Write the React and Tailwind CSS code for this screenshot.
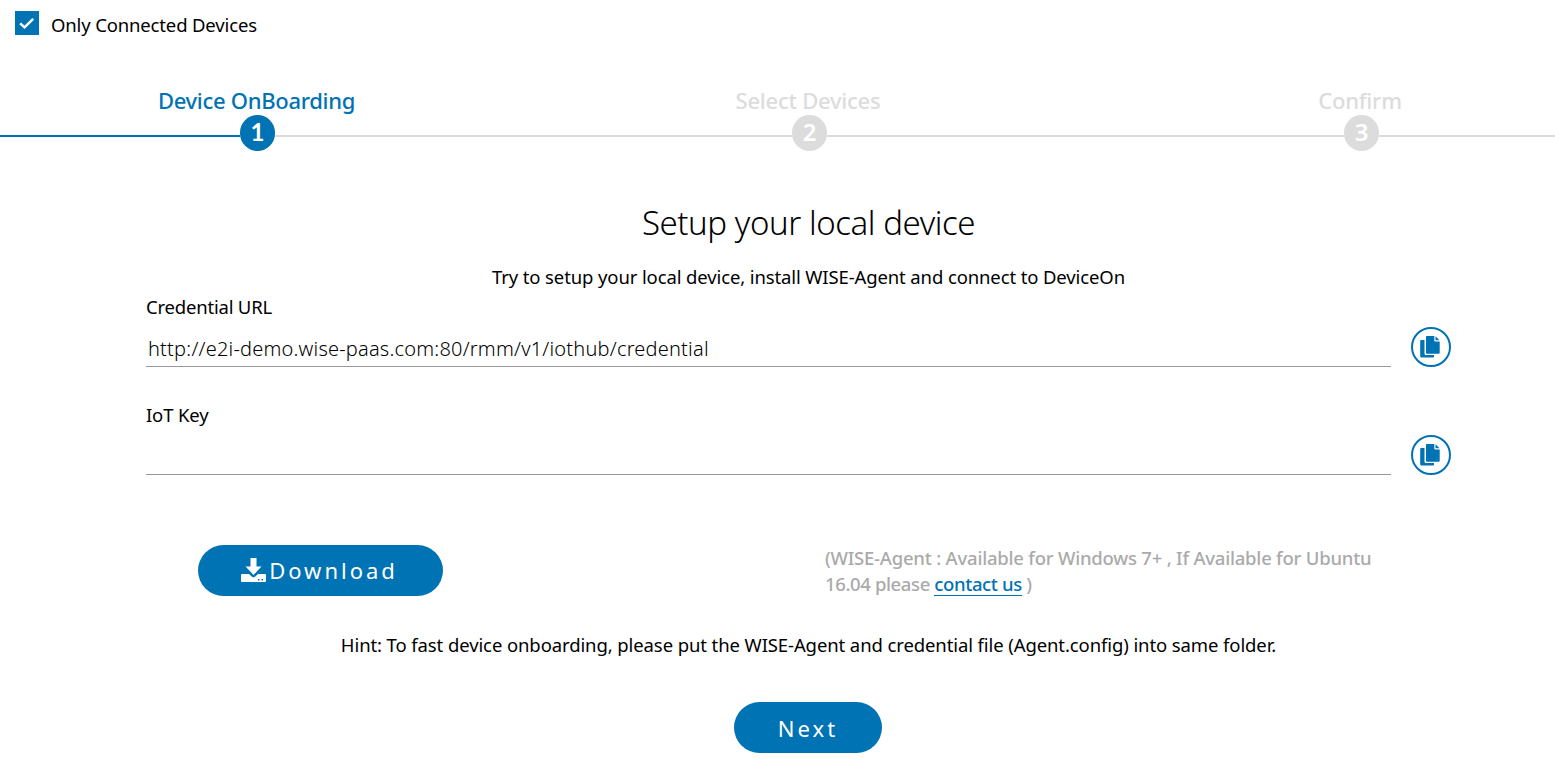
const steps = [
  { n: 1, label: "Device OnBoarding", active: true },
  { n: 2, label: "Select Devices" },
  { n: 3, label: "Confirm" },
];

function CopyIcon() {
  return (
    <svg viewBox="0 0 20 22" className="mr-0.5 h-[22px] w-5 shrink-0" fill="#0073b4">
      <path d="M1.300 4H4.500v13.500a1.500 1.500 0 0 0 1.500 1.500H14v1.500a1 1 0 0 1-1 1H1.500A1.300 1.300 0 0 1 .2 20.200V5A1 1 0 0 1 1.300 4z" />
      <path d="M6.800 0H14.300v4.500a1 1 0 0 0 1 1H19.700v11.200a1 1 0 0 1-1 1H6.800a.8.8 0 0 1-.8-.8V.8a.8.8 0 0 1 .8-.8z" />
      <path d="M15.500 0.200l4 4.100h-4z" />
    </svg>
  );
}

function Field({ label, labelClass, value }) {
  return (
    <div className="h-[108px]">
      <div className={"h-[31px] text-[18.5px] leading-[30px] " + labelClass}>{label}</div>
      <div className="flex h-11 items-start gap-5">
        <div className="h-11 w-[1245px] border-b border-[#999] pl-0.5 text-[20px] leading-[52px] font-light tracking-[0.2px] whitespace-nowrap">
          {value}
        </div>
        <button className="mt-1 flex size-10 items-center justify-center rounded-full border-2 border-[#0073b4]">
          <CopyIcon />
        </button>
      </div>
    </div>
  );
}

export default function App() {
  return (
    <div className="h-[773px] w-[1555px] overflow-hidden bg-white font-['Noto_Sans','Open_Sans',sans-serif] text-black">
      <label className="flex h-[84px] items-start pt-[11px] pl-[15px]">
        <span className="flex size-6 items-center justify-center bg-[#0073b4]">
          <svg viewBox="0 0 24 24" className="size-6" fill="none" stroke="#fff" strokeWidth="2.500">
            <path d="M5.200 12.300l4.300 4L18.200 7.800" />
          </svg>
        </span>
        <span className="ml-3 text-[18.5px] leading-7 tracking-[-0.15px]">Only Connected Devices</span>
      </label>

      <div className="flex h-[71px]">
        {steps.map((s) => (
          <div
            key={s.n}
            className={
              "flex shrink-0 flex-col whitespace-nowrap " +
              (s.n === 1 ? "w-[533px]" : "w-[552px]") +
              (s.active ? " text-[#0073b4]" : " text-[#dcdcdc]")
            }
          >
            <div
              className={
                "h-[31px] text-center text-[22px] leading-8 font-medium " +
                (s.n === 1 ? "pr-[20px] tracking-[-0.3px]" : "pr-0.5 tracking-[-0.24px]")
              }
            >
              {s.label}
            </div>
            <div className="flex w-full items-center">
              <i
                className={
                  "mt-1.5 h-0.5 shrink-0 " + (s.n === 1 ? "w-[240px]" : "w-[259px]") + (s.active ? " bg-[#0073b4]" : " bg-[#dcdcdc]")
                }
              />
              <b
                className={
                  "flex h-9 w-[35px] shrink-0 items-center justify-center rounded-full text-[24px] text-white " +
                  (s.active ? "bg-[#0073b4] font-['Lato'] leading-[34px] font-bold" : "bg-[#dcdcdc] leading-[34px] font-semibold")
                }
              >
                <span className="-mt-0.5">{s.n}</span>
              </b>
              <i className="mt-1.5 h-0.5 flex-1 bg-[#dcdcdc]" />
            </div>
          </div>
        ))}
      </div>

      <main className="ml-[146px] w-[1325px]">
        <h1 className="pt-[42px] text-center text-[33px] leading-[52px] font-light tracking-[-0.42px]">Setup your local device</h1>
        <p className="mt-[14px] h-[29px] text-center text-[18.5px] leading-7 tracking-[-0.12px]">
          Try to setup your local device, install WISE-Agent and connect to DeviceOn
        </p>
        <Field
          label="Credential URL"
          labelClass="tracking-[-0.2px]"
          value="http://e2i-demo.wise-paas.com:80/rmm/v1/iothub/credential"
        />
        <Field label="IoT Key" labelClass="tracking-[-0.15px]" value="" />
        <div className="mt-[37px] flex h-[51px] items-start pl-[52px]">
          <button className="flex h-[51px] w-[245px] items-center justify-center rounded-full bg-[#0073b4] text-[22px] tracking-[3px] text-white">
            <svg viewBox="0 0 25 24" className="mr-px mb-0.5 -ml-0.5 h-6 w-[25px]" fill="#fff">
              <path d="M9.500 0h6v8.500h5L12.500 17 4.500 8.500h5z" />
              <path
                fillRule="evenodd"
                d="M1 16h7l3 2.700q1.500 1.300 3 0L17 16h7q1 0 1 1v6q0 1-1 1H1q-1 0-1-1v-6q0-1 1-1zM17 21h1.500v1.500H17zM20.500 21H22v1.500h-1.500z"
              />
            </svg>
            <span className="ml-0.5">Download</span>
          </button>
          <p className="ml-[382px] w-[580px] text-[18.5px] leading-[26px] font-medium tracking-[-0.22px] whitespace-nowrap text-[#aaa]">
            <span>(WISE-Agent : Available for Windows 7+ , If Available for Ubuntu</span>
            <br />
            <span className="tracking-[-0.38px]">
              16.04 please{" "}
              <a className="inline-block h-[25px] border-b border-[#0073b4] leading-[26px] text-[#0073b4]">contact us</a> )
            </span>
          </p>
        </div>
        <p className="mt-[35px] text-center text-[18.5px] leading-7 tracking-[-0.1px]">
          Hint: To fast device onboarding, please put the WISE-Agent and credential file (Agent.config) into same folder.
        </p>
        <button className="mt-[43px] ml-[588px] flex h-[51px] w-[148px] items-center justify-center rounded-full bg-[#0073b4] pt-0.5 text-[22px] tracking-[3px] text-white">
          Next
        </button>
      </main>
    </div>
  );
}
